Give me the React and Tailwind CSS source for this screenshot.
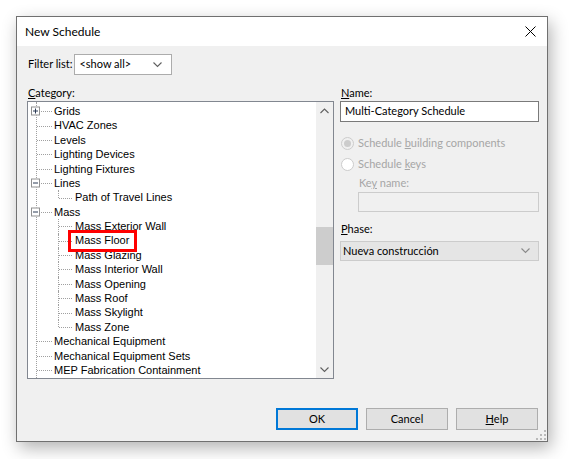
import React from 'react';

const UI_FONT = { fontFamily: 'Lato, "Noto Sans", sans-serif' };
const TREE_FONT = { fontFamily: '"Liberation Sans", Arial, sans-serif' };

const categories = [
  { label: 'Grids', toggle: 'plus' },
  { label: 'HVAC Zones' },
  { label: 'Levels' },
  { label: 'Lighting Devices' },
  { label: 'Lighting Fixtures' },
  { label: 'Lines', toggle: 'minus' },
  { label: 'Path of Travel Lines', child: true, last: true },
  { label: 'Mass', toggle: 'minus' },
  { label: 'Mass Exterior Wall', child: true },
  { label: 'Mass Floor', child: true, marked: true },
  { label: 'Mass Glazing', child: true },
  { label: 'Mass Interior Wall', child: true },
  { label: 'Mass Opening', child: true },
  { label: 'Mass Roof', child: true },
  { label: 'Mass Skylight', child: true },
  { label: 'Mass Zone', child: true, last: true },
  { label: 'Mechanical Equipment' },
  { label: 'Mechanical Equipment Sets' },
  { label: 'MEP Fabrication Containment' },
];

const Chevron = ({ dir = 'down', color = '#606060' }) => (
  <svg width="9" height="6" viewBox="0 0 9 6">
    <polyline
      points={dir === 'down' ? '0.5,0.5 4.5,4.5 8.5,0.5' : '0.5,5 4.5,1 8.5,5'}
      fill="none"
      stroke={color}
      strokeWidth="1.1"
    />
  </svg>
);

const ToggleBox = ({ kind }) => (
  <div className="absolute left-[3px] top-1/2 -translate-y-1/2 w-[9px] h-[9px] bg-white border border-[#919191] z-10">
    <svg width="7" height="7" viewBox="0 0 7 7" className="block">
      <line x1="1" y1="3.5" x2="6" y2="3.5" stroke="#2b3a55" strokeWidth="1" />
      {kind === 'plus' && <line x1="3.5" y1="1" x2="3.5" y2="6" stroke="#2b3a55" strokeWidth="1" />}
    </svg>
  </div>
);

const TreeRow = ({ item }) => (
  <div className="relative h-[14.4px] flex items-center">
    {item.child ? (
      <>
        <div
          className={`absolute left-[30px] top-0 border-l border-dotted border-[#a0a0a0] ${item.last ? 'h-1/2' : 'h-full'}`}
        />
        <div className="absolute left-[31px] top-1/2 w-[13px] border-t border-dotted border-[#a0a0a0]" />
        <span className="absolute left-[47px] whitespace-nowrap">{item.label}</span>
      </>
    ) : (
      <>
        <div className="absolute left-[9px] top-1/2 w-[15px] border-t border-dotted border-[#a0a0a0]" />
        {item.toggle && <ToggleBox kind={item.toggle} />}
        <span className="absolute left-[26px] whitespace-nowrap">{item.label}</span>
      </>
    )}
    {item.marked && (
      <div className="absolute left-[40px] top-[-4px] w-[69px] h-[22px] border-[3px] border-[#ff0000] z-20" />
    )}
  </div>
);

const Button = ({ children, primary }) => (
  <button
    className={`w-[82px] h-[22px] bg-[#e1e1e1] text-[11px] text-black ${
      primary ? 'border-2 border-[#0078d7]' : 'border border-[#adadad]'
    }`}
  >
    {children}
  </button>
);

const ResizeGrip = () => (
  <svg width="10" height="10" viewBox="0 0 10 10" className="absolute right-[1px] bottom-[1px]">
    {[
      [8, 0], [8, 4], [4, 4], [8, 8], [4, 8], [0, 8],
    ].map(([x, y]) => (
      <rect key={`${x}-${y}`} x={x} y={y} width="2" height="2" fill="#b9b9b9" />
    ))}
  </svg>
);

export default function App() {
  return (
    <div className="w-[570px] h-[459px] bg-white p-[16px]" style={UI_FONT}>
      <div className="relative w-[532px] h-[426px] flex flex-col bg-[#f0f0f0] border border-[#707070] shadow-[3px_6px_16px_rgba(0,0,0,0.3)]">
        {/* title bar */}
        <div className="h-[29px] bg-white flex items-center justify-between pl-[8px] pr-[11px]">
          <span className="text-[12px] text-black">New Schedule</span>
          <svg width="11" height="11" viewBox="0 0 11 11">
            <line x1="0.5" y1="0.5" x2="10.5" y2="10.5" stroke="#000" strokeWidth="1" />
            <line x1="10.5" y1="0.5" x2="0.5" y2="10.5" stroke="#000" strokeWidth="1" />
          </svg>
        </div>

        <div className="flex-1 flex flex-col pl-[10px] pr-[8px] text-[11px] text-black">
          {/* filter */}
          <div className="mt-[8px] flex items-center">
            <span className="ml-[1px]">Filter list:</span>
            <div className="ml-[2px] w-[98px] h-[21px] bg-white border border-[#acacac] flex items-center justify-between pl-[4px] pr-[9px]">
              <span>&lt;show all&gt;</span>
              <Chevron />
            </div>
          </div>

          <div className="mt-[10px] flex gap-[6px]">
            {/* category tree */}
            <div className="w-[307px] shrink-0 flex flex-col">
              <span className="h-[16px] ml-[1px]">
                <u>C</u>ategory:
              </span>
              <div className="h-[278px] bg-white border border-[#828790] flex">
                <div className="relative flex-1 pt-[2px] overflow-hidden" style={TREE_FONT}>
                  <div className="absolute left-[8px] top-0 bottom-0 border-l border-dotted border-[#a0a0a0]" />
                  {categories.map((item) => (
                    <TreeRow key={item.label} item={item} />
                  ))}
                </div>
                <div className="w-[17px] bg-[#f0f0f0] flex flex-col">
                  <div className="h-[17px] flex items-center justify-center">
                    <Chevron dir="up" />
                  </div>
                  <div className="mt-[108px] h-[38px] bg-[#cdcdcd]" />
                  <div className="flex-1" />
                  <div className="h-[17px] flex items-center justify-center">
                    <Chevron />
                  </div>
                </div>
              </div>
            </div>

            {/* schedule settings */}
            <div className="w-[199px] shrink-0 flex flex-col">
              <span className="h-[16px] ml-[1px]">
                <u>N</u>ame:
              </span>
              <div className="h-[21px] bg-white border border-[#7a7a7a] flex items-center pl-[4px]">
                Multi-Category Schedule
              </div>

              <div className="mt-[13px] h-[16px] flex items-center text-[#a6a6a6]">
                <div className="ml-[1px] w-[13px] h-[13px] rounded-full border border-[#cccccc] bg-[#f0f0f0] flex items-center justify-center">
                  <div className="w-[7px] h-[7px] rounded-full bg-[#cccccc]" />
                </div>
                <span className="ml-[4px]">
                  Schedule <u>b</u>uilding components
                </span>
              </div>
              <div className="mt-[5px] h-[16px] flex items-center text-[#a6a6a6]">
                <div className="ml-[1px] w-[13px] h-[13px] rounded-full border border-[#cccccc] bg-white" />
                <span className="ml-[4px]">
                  Schedule <u>k</u>eys
                </span>
              </div>

              <span className="mt-[3px] h-[16px] ml-[19px] text-[#a6a6a6]">
                Ke<u>y</u> name:
              </span>
              <div className="mt-[1px] ml-[18px] h-[20px] bg-[#f0f0f0] border border-[#cccccc]" />

              <span className="mt-[9px] h-[16px] ml-[1px]">
                <u>P</u>hase:
              </span>
              <div className="mt-[4px] h-[20px] bg-[#e5e5e5] border border-[#cccccc] flex items-center justify-between pl-[2px] pr-[8px]">
                <span>Nueva construcción</span>
                <Chevron color="#8a8a8a" />
              </div>
            </div>
          </div>

          {/* dialog buttons */}
          <div className="mt-auto mb-[11px] mr-[1px] flex justify-end gap-[8px]">
            <Button primary>OK</Button>
            <Button>Cancel</Button>
            <Button>
              <u>H</u>elp
            </Button>
          </div>
        </div>
        <ResizeGrip />
      </div>
    </div>
  );
}
